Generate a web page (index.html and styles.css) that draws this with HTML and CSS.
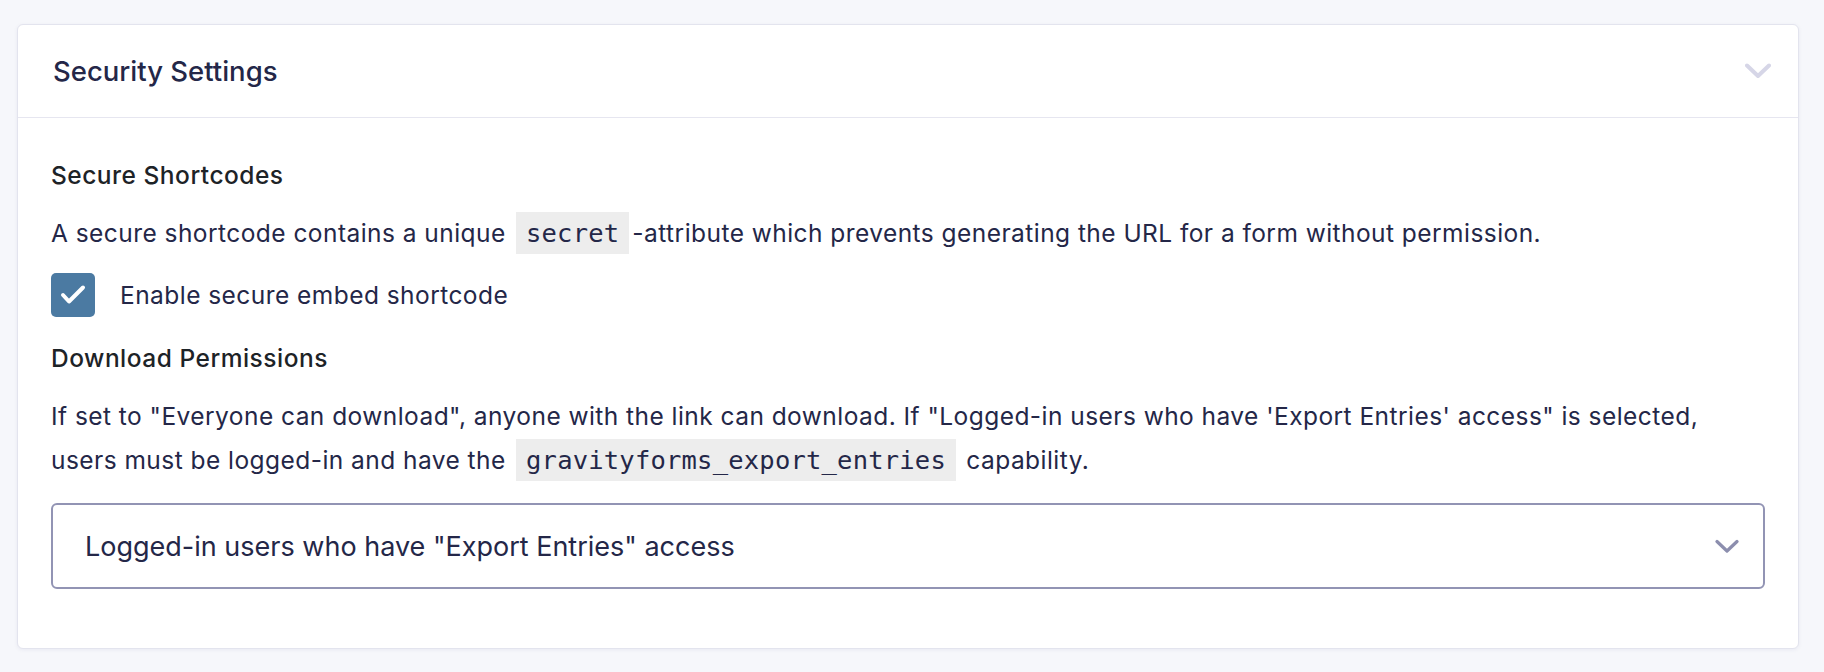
FILE: index.html
```html
<!DOCTYPE html>
<html lang="en">
<head>
  <meta charset="UTF-8">
  <meta name="viewport" content="width=device-width, initial-scale=1.0">
  <title>Security Settings</title>
  <link rel="stylesheet" href="styles.css">
</head>
<body>
  <section class="panel">
    <header class="panel-header">
      <h2 class="panel-title">Security Settings</h2>
      <svg class="panel-toggle" width="26" height="16" viewBox="0 0 26 16" aria-hidden="true">
        <path d="M2 2.5 L13 13 L24 2.5" fill="none" stroke="currentColor" stroke-width="4" stroke-linecap="round" stroke-linejoin="round"/>
      </svg>
    </header>

    <div class="panel-body">
      <div class="field">
        <h3 class="field-label">Secure Shortcodes</h3>
        <p class="field-desc">A secure shortcode contains a unique <code>secret</code>-attribute which prevents generating the URL for a form without permission.</p>
        <label class="check">
          <span class="check-box">
            <svg width="44" height="44" viewBox="0 0 44 44" aria-hidden="true">
              <path d="M12 22 L18 28.5 L32 14.5" fill="none" stroke="#fff" stroke-width="4" stroke-linecap="round" stroke-linejoin="round"/>
            </svg>
          </span>
          <span>Enable secure embed shortcode</span>
        </label>
      </div>

      <div class="field">
        <h3 class="field-label">Download Permissions</h3>
        <p class="field-desc">If set to "Everyone can download", anyone with the link can download. If "Logged-in users who have 'Export Entries' access" is selected, users must be logged-in and have the <code>gravityforms_export_entries</code> capability.</p>
        <div class="select">
          <span>Logged-in users who have "Export Entries" access</span>
          <svg class="select-arrow" width="24" height="15" viewBox="0 0 24 15" aria-hidden="true">
            <path d="M2 2.5 L12 12 L22 2.5" fill="none" stroke="currentColor" stroke-width="3.2" stroke-linecap="round" stroke-linejoin="round"/>
          </svg>
        </div>
      </div>
    </div>
  </section>
</body>
</html>
```

FILE: styles.css
```css
body {
  margin: 0;
  padding: 24px 25px 23px 17px;
  background-color: #f6f7fb;
  font-family: Inter, "Noto Sans", sans-serif;
  color: #242748;
}

.panel {
  background: #fff;
  border: 1px solid #e3e4ee;
  border-radius: 6px;
  box-shadow: 0 1px 4px rgba(18, 25, 97, 0.06);
}

.panel-header {
  display: flex;
  align-items: center;
  justify-content: space-between;
  height: 92px;
  padding: 0 27px 0 35px;
  border-bottom: 1px solid #e6e6f0;
}

.panel-title {
  margin: 0;
  font-size: 27.5px;
  font-weight: 500;
  color: #242748;
}

.panel-toggle {
  color: #d6d6e7;
}

.panel-body {
  padding: 40px 33px 59px;
}

.field-label {
  margin: 0;
  font-size: 24.5px;
  line-height: 34px;
  font-weight: 500;
  letter-spacing: 0.5px;
  color: #1d2327;
}

.field-desc {
  margin: 19px 0 0;
  font-size: 24.5px;
  line-height: 44px;
  letter-spacing: 0.45px;
}

.field-desc code {
  display: inline-block;
  font-family: "DejaVu Sans Mono", "Liberation Mono", monospace;
  font-size: 25.5px;
  line-height: 42px;
  letter-spacing: 0.2px;
  background: #ededed;
  padding: 0 10px;
  margin: 0 3px;
  color: #242748;
}

.check {
  display: flex;
  align-items: center;
  gap: 25px;
  margin: 18px 0 24px;
  font-size: 24.5px;
  line-height: 44px;
  letter-spacing: 0.45px;
}

.check-box {
  display: block;
  width: 44px;
  height: 44px;
  border-radius: 5px;
  background: #4b7aa2;
}

.check-box svg {
  display: block;
}

.select {
  display: flex;
  align-items: center;
  justify-content: space-between;
  height: 82px;
  margin-top: 21px;
  padding: 0 24px 0 32px;
  border: 2px solid #9294b4;
  border-radius: 6px;
  font-size: 27px;
}

.select-arrow {
  color: #8c8eae;
}
```
